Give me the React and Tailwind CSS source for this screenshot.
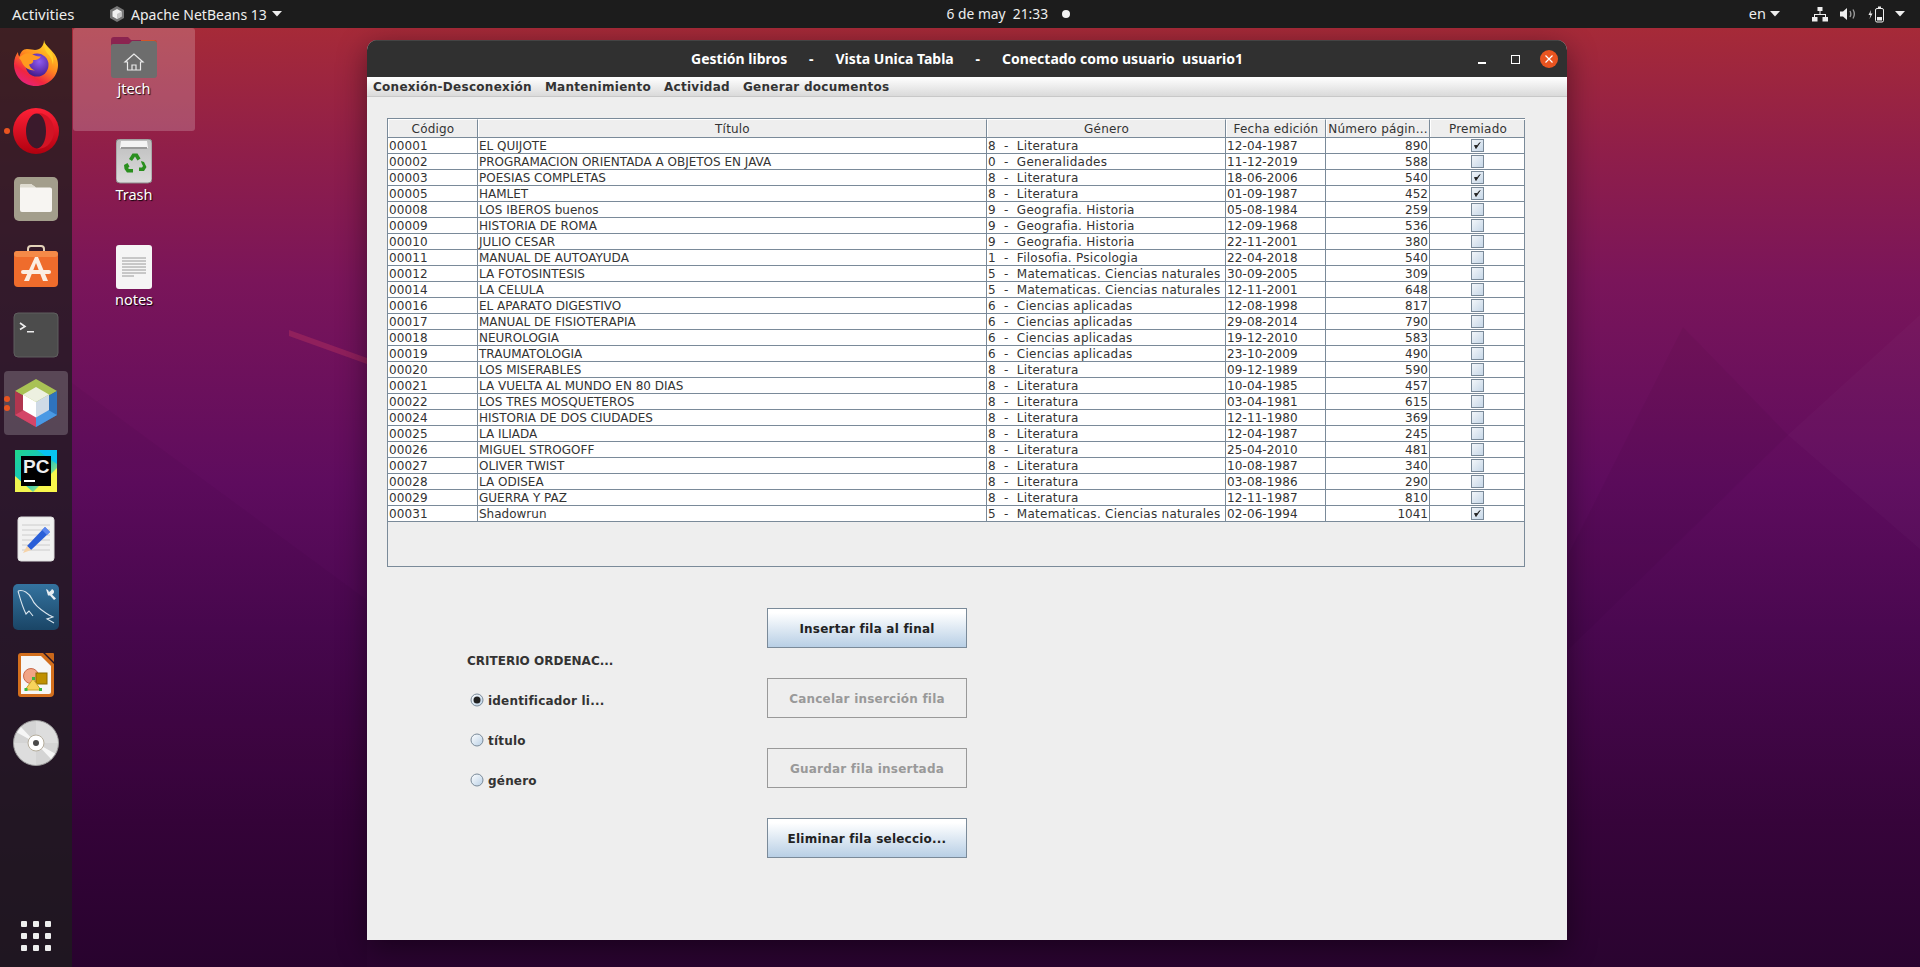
import React from "react";

const ROWS = [
  ["00001","EL QUIJOTE","8  -  Literatura","12-04-1987","890",1],
  ["00002","PROGRAMACION ORIENTADA A OBJETOS EN JAVA","0  -  Generalidades","11-12-2019","588",0],
  ["00003","POESIAS COMPLETAS","8  -  Literatura","18-06-2006","540",1],
  ["00005","HAMLET","8  -  Literatura","01-09-1987","452",1],
  ["00008","LOS IBEROS buenos","9  -  Geografia. Historia","05-08-1984","259",0],
  ["00009","HISTORIA DE ROMA","9  -  Geografia. Historia","12-09-1968","536",0],
  ["00010","JULIO CESAR","9  -  Geografia. Historia","22-11-2001","380",0],
  ["00011","MANUAL DE AUTOAYUDA","1  -  Filosofia. Psicologia","22-04-2018","540",0],
  ["00012","LA FOTOSINTESIS","5  -  Matematicas. Ciencias naturales","30-09-2005","309",0],
  ["00014","LA CELULA","5  -  Matematicas. Ciencias naturales","12-11-2001","648",0],
  ["00016","EL APARATO DIGESTIVO","6  -  Ciencias aplicadas","12-08-1998","817",0],
  ["00017","MANUAL DE FISIOTERAPIA","6  -  Ciencias aplicadas","29-08-2014","790",0],
  ["00018","NEUROLOGIA","6  -  Ciencias aplicadas","19-12-2010","583",0],
  ["00019","TRAUMATOLOGIA","6  -  Ciencias aplicadas","23-10-2009","490",0],
  ["00020","LOS MISERABLES","8  -  Literatura","09-12-1989","590",0],
  ["00021","LA VUELTA AL MUNDO EN 80 DIAS","8  -  Literatura","10-04-1985","457",0],
  ["00022","LOS TRES MOSQUETEROS","8  -  Literatura","03-04-1981","615",0],
  ["00024","HISTORIA DE DOS CIUDADES","8  -  Literatura","12-11-1980","369",0],
  ["00025","LA ILIADA","8  -  Literatura","12-04-1987","245",0],
  ["00026","MIGUEL STROGOFF","8  -  Literatura","25-04-2010","481",0],
  ["00027","OLIVER TWIST","8  -  Literatura","10-08-1987","340",0],
  ["00028","LA ODISEA","8  -  Literatura","03-08-1986","290",0],
  ["00029","GUERRA Y PAZ","8  -  Literatura","12-11-1987","810",0],
  ["00031","Shadowrun","5  -  Matematicas. Ciencias naturales","02-06-1994","1041",1],
];

const Arrow = ({ className = "" }) => (
  <svg width="10" height="6" viewBox="0 0 10 6" className={className}><path d="M0 0h10L5 5.5z" fill="#eee" /></svg>
);

const HexSmall = () => (
  <svg width="16" height="18" viewBox="0 0 16 18">
    <path d="M8 1l7 4v8l-7 4-7-4V5z" fill="#777" />
    <path d="M8 4l4.5 2.5v5L8 14l-4.5-2.5v-5z" fill="#f2f2f2" />
    <path d="M8 9l4.5-2.5v5L8 14z" fill="#c8c8c8" />
  </svg>
);

const TopBar = () => (
  <div className="flex h-[28px] shrink-0 items-center bg-[#1c1c1c] text-[#eeeeee] font-['Noto_Sans',sans-serif] relative z-20">
    <span className="ml-[12px] w-[97px] text-[15px]">Activities</span>
    <HexSmall />
    <span className="ml-[6px] text-[14px]">Apache NetBeans 13</span>
    <Arrow className="ml-[5px]" />
    <div className="flex-1 flex justify-center items-center">
      <span className="whitespace-pre ml-[-14px] text-[13.8px]">6 de may  21:33</span>
      <span className="w-[8px] h-[8px] rounded-full bg-[#f2f2f2] ml-[14px]" />
    </div>
    <span className="mr-[4px] text-[14.5px]">en</span>
    <Arrow className="mr-[32px]" />
    <svg width="16" height="15" viewBox="0 0 16 15" className="mr-[12px]" fill="#eee">
      <rect x="5.5" y="0" width="5" height="4" />
      <rect x="0" y="10" width="5.5" height="4.5" />
      <rect x="10.5" y="10" width="5.5" height="4.5" />
      <path d="M7.5 4h1v3h5.5v3h-1V8H3v2H2V7h5.5z" />
    </svg>
    <svg width="16" height="14" viewBox="0 0 16 14" className="mr-[12px]">
      <path d="M0 4.5h3L7 1v12L3 9.5H0z" fill="#eee" />
      <path d="M10 4c1 1.8 1 4.2 0 6M13 2.5c1.8 3 1.8 6 0 9" stroke="#999" strokeWidth="1.4" fill="none" />
    </svg>
    <svg width="17" height="17" viewBox="0 0 17 17" className="mr-[10px]">
      <path d="M3 4L0.5 9H2.5L1.5 13L4.5 7.5H2.5z" fill="#eee" />
      <rect x="7.5" y="2.5" width="8" height="13.5" rx="1.5" fill="none" stroke="#eee" />
      <rect x="10" y="0.5" width="3" height="2" fill="#eee" />
      <rect x="9" y="11" width="5" height="3.5" fill="#eee" />
    </svg>
    <Arrow className="mr-[15px]" />
  </div>
);

const Firefox = () => (
  <svg width="46" height="46" viewBox="0 0 46 46">
    <defs>
      <linearGradient id="ff1" x1="0.8" y1="0" x2="0.2" y2="1"><stop offset="0" stopColor="#ffe226" /><stop offset=".45" stopColor="#ff8a1f" /><stop offset=".75" stopColor="#f0263f" /><stop offset="1" stopColor="#e3218b" /></linearGradient>
      <radialGradient id="ff2" cx=".6" cy=".35" r=".7"><stop offset="0" stopColor="#8f5cf0" /><stop offset=".7" stopColor="#5b2ba8" /><stop offset="1" stopColor="#3a1d7f" /></radialGradient>
    </defs>
    <path d="M31 0c.6 4 3 6 5.500 8.500C42 14 45 18 45 25c0 12-10 21-22 21C10 46 1 36 1 24c0-5 2-9.500 4-12 0 2 .5 3.500 1.500 4.500C7.500 12 10 9 14 9c4 0 6 1 8 1 5 0 9-4 9-10z" fill="url(#ff1)" />
    <circle cx="24" cy="25" r="11.500" fill="url(#ff2)" />
    <path d="M6 18c3-4 9-6 13-4 3 1.500 5 3 9 2.500-2 3-5 3.500-8 3.500 1 2-1 4-4 4.500 1 3 3 5 6 6-6 0-11-3-13-8-.5-1.500-1.500-3-3-4.500z" fill="#ff9a1f" />
    <path d="M31 3c5 5 11 11 9 22-1-6-3-9-6-12-2-3-3-6-3-10z" fill="#ffd02a" />
  </svg>
);
const Opera = () => (
  <svg width="46" height="46" viewBox="0 0 46 46">
    <defs><linearGradient id="op" x1="0" y1="0" x2="0" y2="1"><stop offset="0" stopColor="#ff2137" /><stop offset="1" stopColor="#b0000f" /></linearGradient></defs>
    <circle cx="23" cy="23" r="23" fill="url(#op)" />
    <ellipse cx="24" cy="23" rx="11" ry="17.500" fill="#3a1a2c" />
    <path d="M24 5.500c4.500 0 9 7 9 17.500s-4.500 17.500-9 17.500c9 1.500 17-7 17-17.500S33 4 24 5.500z" fill="#d31425" />
  </svg>
);
const Files = () => (
  <svg width="46" height="46" viewBox="0 0 46 46">
    <rect width="44" height="44" x="1" y="1" rx="5" fill="#a39e8c" />
    <path d="M7 10a2 2 0 012-2h9l5 3.500h14a2 2 0 012 2V34a2 2 0 01-2 2H9a2 2 0 01-2-2z" fill="#f7f5f2" />
    <path d="M7 10a2 2 0 012-2h9l5 3.500H7z" fill="#dedbd0" />
  </svg>
);
const Store = () => (
  <svg width="46" height="46" viewBox="0 0 46 46">
    <path d="M15 8V5a3 3 0 013-3h10a3 3 0 013 3v3" stroke="#e3d2b9" strokeWidth="2" fill="none" />
    <rect x="1" y="7" width="44" height="36" rx="4" fill="#ef6c2c" />
    <rect x="1" y="7" width="44" height="6" rx="3" fill="#f58a48" />
    <path d="M22 13h3l10 24h-5l-7-18-7 18h-5z" fill="#fbeee2" />
    <rect x="8" y="26" width="30" height="4" rx="2" fill="#fbeee2" />
  </svg>
);
const Terminal = () => (
  <svg width="46" height="46" viewBox="0 0 46 46">
    <rect x="1" y="1" width="44" height="44" rx="4" fill="#4c4c4c" />
    <rect x="1" y="1" width="44" height="44" rx="4" fill="none" stroke="#5f5f5f" />
    <path d="M7 11l5 3.500-5 3" stroke="#eee" strokeWidth="1.600" fill="none" />
    <rect x="14" y="19" width="7" height="1.500" fill="#eee" />
  </svg>
);
const NetBeans = () => (
  <svg width="44" height="50" viewBox="0 0 44 50">
    <path d="M22 1l21 12-21 12L1 13z" fill="#a9c255" />
    <path d="M1 13l21 12v24L1 37z" fill="#b0364f" />
    <path d="M1 37l21-12v24z" fill="#d44568" />
    <path d="M43 13L22 25v24l21-12z" fill="#2f73bd" />
    <path d="M43 37L22 25v24z" fill="#4a99e4" />
    <path d="M22 9l13 7.500-13 7.500-13-7.500z" fill="#edf0e0" />
    <path d="M9 16.500l13 7.500v15.500l-13-7.500z" fill="#ffffff" />
    <path d="M35 16.500L22 24v15.500l13-7.500z" fill="#cfdae6" />
  </svg>
);
const PyCharm = () => (
  <svg width="42" height="42" viewBox="0 0 42 42">
    <defs><linearGradient id="pc" x1="0" y1="0" x2="1" y2="1"><stop offset="0" stopColor="#21d789" /><stop offset=".5" stopColor="#12c2c8" /><stop offset="1" stopColor="#fcf84a" /></linearGradient></defs>
    <rect width="42" height="42" fill="url(#pc)" />
    <path d="M0 42V26l18 16zM42 42H18l24-24z" fill="#fcf84a" opacity=".95" />
    <path d="M22 0h20v14z" fill="#07c3f2" />
    <rect x="6" y="6" width="30" height="30" fill="#000" />
    <text x="8" y="23" fontFamily="'Liberation Sans',sans-serif" fontWeight="700" fontSize="19" fill="#eee">PC</text>
    <rect x="9" y="30" width="11" height="2" fill="#fff" />
  </svg>
);
const Editor = () => (
  <svg width="38" height="46" viewBox="0 0 38 46">
    <rect x="1" y="1" width="36" height="44" rx="3" fill="#f1f1f1" stroke="#ddd" />
    <path d="M5 9h28M5 14h28M5 19h28M5 24h28M5 29h28M5 34h28" stroke="#ccc" strokeWidth="1" />
    <path d="M10 30L28 11l5 5-19 18z" fill="#2a5fd8" />
    <path d="M28 11l5 5-3 3-5-5z" fill="#5b86ef" />
    <path d="M10 30l4 4-8 3z" fill="#f6d3a8" />
  </svg>
);
const MySQL = () => (
  <svg width="46" height="46" viewBox="0 0 46 46">
    <defs><linearGradient id="my" x1="0" y1="0" x2="0" y2="1"><stop offset="0" stopColor="#34739f" /><stop offset="1" stopColor="#1a4566" /></linearGradient></defs>
    <rect width="46" height="46" rx="5" fill="url(#my)" />
    <path d="M5 7C10 5 16 9 19 15 22 23 30 27 36 31L40 33 34 35 41 39M5 7C7 14 9 22 13 30L16 27 20 32" stroke="#dbe6ee" strokeWidth="1.100" fill="none" />
    <path d="M33 5l2 1 1 2 2-1.500 1-1.500c2 1 3 3 1 5l-1 .5 4 4-2 1.500-4-4.500-2 0z" fill="#e8eef2" />
  </svg>
);
const Impress = () => (
  <svg width="38" height="46" viewBox="0 0 38 46">
    <path d="M4 1h22l11 11v29a4 4 0 01-4 4H4a3 3 0 01-3-3V4a3 3 0 013-3z" fill="#d36f1d" />
    <path d="M4 4h20l10 10v26a2 2 0 01-2 2H4z" fill="#f6f6f6" />
    <path d="M28 1h8a1 1 0 011 1v8z" fill="#c9661a" />
    <circle cx="14" cy="24" r="7.500" fill="#f2a585" stroke="#c9694a" />
    <rect x="19" y="21" width="11" height="11" fill="#c09000" stroke="#8c6a00" />
    <path d="M16 27l8 11H8z" fill="#f8d35b" stroke="#c9a22a" />
    <rect x="7.500" y="36" width="3" height="3" fill="#3db53d" /><rect x="22" y="36" width="3" height="3" fill="#3db53d" /><rect x="15" y="25" width="3" height="3" fill="#3db53d" />
  </svg>
);
const Disc = () => (
  <svg width="46" height="46" viewBox="0 0 46 46">
    <circle cx="23" cy="23" r="22.500" fill="#d4d4d4" stroke="#9a9a9a" />
    <path d="M23 23L4 12.500 8 7zM23 23l19 10.500-4 5.500z" fill="#f6f6f6" />
    <path d="M23 1v22H1a22 22 0 0022 22V23h22A22 22 0 0023 1z" fill="#fff" opacity=".22" />
    <circle cx="23" cy="23" r="8" fill="#fff" stroke="#b5ad9c" />
    <circle cx="23" cy="23" r="3" fill="#4a4a4a" />
  </svg>
);

const DockItem = ({ children, dots = 0, active }) => (
  <div className="relative h-[68px] flex items-center justify-center">
    {active && <div className="absolute left-[4px] top-[2px] w-[64px] h-[64px] rounded-[4px] bg-white/20" />}
    {dots > 0 && (
      <div className="absolute left-[4px] top-0 bottom-0 flex flex-col justify-center gap-[3px]">
        {Array.from({ length: dots }).map((_, i) => (
          <span key={i} className="w-[6px] h-[6px] rounded-full bg-[#e95420]" />
        ))}
      </div>
    )}
    <div className="relative flex">{children}</div>
  </div>
);

const Dock = () => (
  <div className="w-[72px] shrink-0 flex flex-col pt-[1px] bg-[#1c1c1c]/75 relative z-10">
    <DockItem><Firefox /></DockItem>
    <DockItem dots={1}><Opera /></DockItem>
    <DockItem><Files /></DockItem>
    <DockItem><Store /></DockItem>
    <DockItem><Terminal /></DockItem>
    <DockItem dots={2} active><NetBeans /></DockItem>
    <DockItem><PyCharm /></DockItem>
    <DockItem><Editor /></DockItem>
    <DockItem><MySQL /></DockItem>
    <DockItem><Impress /></DockItem>
    <DockItem><Disc /></DockItem>
    <div className="mt-auto mb-[16px] self-center grid grid-cols-3 gap-[6px]">
      {Array.from({ length: 9 }).map((_, i) => (
        <span key={i} className="w-[6px] h-[6px] rounded-[1px] bg-[#eeeeee]" />
      ))}
    </div>
  </div>
);

const DeskLabel = ({ children }) => (
  <span className="pt-[1px] text-[14.5px] leading-[18px] text-white font-['Noto_Sans',sans-serif] [text-shadow:1px_1px_1px_rgba(0,0,0,0.9)]">{children}</span>
);

const Desktop = () => (
  <>
    <div className="absolute left-[73px] top-[28px] w-[122px] h-[103px] rounded-[3px] bg-white/20 flex flex-col items-center pt-[8px]">
      <svg width="46" height="42" viewBox="0 0 46 42">
        <path d="M0 4a3 3 0 013-3h14l3 3h23a3 3 0 013 3v10H0z" fill="#8b2450" />
        <path d="M30 4h13a3 3 0 013 3v6H30z" fill="#d4542a" />
        <path d="M0 10a2 2 0 012-2h16l3-3h22a3 3 0 013 3v31a3 3 0 01-3 3H3a3 3 0 01-3-3z" fill="#6d6d6d" />
        <path d="M23 18l-9 8h2.500v8h13v-8H32zM21 29h4v5h-4z" fill="none" stroke="#eaeaea" strokeWidth="1.200" />
      </svg>
      <DeskLabel>jtech</DeskLabel>
    </div>
    <div className="absolute left-[73px] top-[139px] w-[122px] flex flex-col items-center">
      <svg width="36" height="45" viewBox="0 0 36 45">
        <defs><linearGradient id="tr" x1="0" y1="0" x2="0" y2="1"><stop offset="0" stopColor="#bdbdbd" /><stop offset="1" stopColor="#dcdcdc" /></linearGradient></defs>
        <rect width="36" height="44" rx="4" fill="url(#tr)" stroke="#8a8a8a" />
        <path d="M5 2h26l1 7H4z" fill="#f4f4f4" />
        <path d="M5 8h26v2H5z" fill="#9a9a9a" />
        <g fill="#2a8f1e">
          <path d="M13 20l3.500-5.500h5l3 5-3 2-2.500-4-3 4.500z" />
          <path d="M25 22l3 1 2.500 5-2.500 4h-5v-3.500h3l1-1.500-1.500-3z" />
          <path d="M8 26l3.500-2 2 3.500-1.500 1.500 1 1h4v3.500h-6l-2.500-3.500z" />
        </g>
      </svg>
      <DeskLabel>Trash</DeskLabel>
    </div>
    <div className="absolute left-[73px] top-[245px] w-[122px] flex flex-col items-center">
      <svg width="36" height="44" viewBox="0 0 36 44">
        <rect width="36" height="44" rx="3" fill="#f5f5f5" />
        <path d="M6 13h24M6 16h24M6 19h24M6 22h24M6 25h24M6 28h24M6 31h12" stroke="#9a9a9a" strokeWidth="1" />
      </svg>
      <DeskLabel>notes</DeskLabel>
    </div>
  </>
);

const Check = ({ on }) => (
  <svg width="13" height="13" viewBox="0 0 13 13">
    <defs><linearGradient id="cb" x1="0" y1="0" x2="1" y2="1"><stop offset="0" stopColor="#f4f7fa" /><stop offset="1" stopColor="#c5d6e7" /></linearGradient></defs>
    <rect x=".5" y=".5" width="12" height="12" fill="url(#cb)" stroke="#7a8a99" />
    {on ? <path d="M3.500 6.500l1.500 3 4-6-2.700 3z" fill="#222" stroke="#222" strokeWidth=".9" /> : null}
  </svg>
);

const Cell = ({ className = "", children }) => (
  <div className={`h-full shrink-0 border-r border-[#7a8a99] overflow-hidden whitespace-pre leading-[16px] ${className}`}>{children}</div>
);

const HCell = ({ className = "", children }) => (
  <div className={`h-full shrink-0 border-r border-[#7a8a99] overflow-hidden whitespace-pre text-center leading-[18px] tracking-[0.2px] border-t border-l border-t-white border-l-white ${className}`}>{children}</div>
);

const BookTable = () => (
  <div className="ml-[20px] mt-[21px] w-[1138px] h-[449px] border border-[#7a8a99] bg-[#eeeeee] font-['DejaVu_Sans',sans-serif] text-[12px] text-[#333333]">
    <div className="flex h-[19px] border-b border-[#7a8a99]">
      <HCell className="w-[90px]">Código</HCell>
      <HCell className="w-[509px]">Título</HCell>
      <HCell className="w-[239px]">Género</HCell>
      <HCell className="w-[100px]">Fecha edición</HCell>
      <HCell className="w-[104px]">Número págin...</HCell>
      <HCell className="w-[95px] border-r-0">Premiado</HCell>
    </div>
    {ROWS.map((r) => (
      <div key={r[0]} className="flex h-[16px] border-b border-[#7a8a99] bg-white">
        <Cell className="w-[90px] pl-[1px] tracking-[0.1px]">{r[0]}</Cell>
        <Cell className="w-[509px] pl-[1px]">{r[1]}</Cell>
        <Cell className="w-[239px] pl-[1px] tracking-[0.27px]">{r[2]}</Cell>
        <Cell className="w-[100px] pl-[1px] tracking-[0.1px]">{r[3]}</Cell>
        <Cell className="w-[104px] pr-[1px] text-right">{r[4]}</Cell>
        <div className="flex-1 flex items-center justify-center"><Check on={r[5]} /></div>
      </div>
    ))}
  </div>
);

const JButton = ({ children, disabled }) => (
  <div className={
    disabled
      ? "w-[200px] h-[40px] pt-[1px] tracking-[0.22px] border border-[#999999] flex items-center justify-center text-[#999999]"
      : "w-[200px] h-[40px] pt-[1px] tracking-[0.22px] border border-[#7a8a99] flex items-center justify-center text-[#222222] bg-gradient-to-b from-white from-[10%] to-[#b8cfe5]"
  }>{children}</div>
);

const Radio = ({ on, label }) => (
  <div className="flex items-center h-[40px] pl-[3px]">
    <svg width="14" height="14" viewBox="0 0 14 14">
      <defs><linearGradient id="rd" x1="0" y1="0" x2="1" y2="1"><stop offset="0" stopColor="#ffffff" /><stop offset="1" stopColor="#b8cfe5" /></linearGradient></defs>
      <circle cx="7" cy="7" r="6" fill="url(#rd)" stroke="#7a8a99" />
      {on ? <circle cx="7" cy="7" r="3.500" fill="#222" /> : null}
    </svg>
    <span className="ml-[4px] pt-[1px] tracking-[0.2px]">{label}</span>
  </div>
);

const AppWindow = () => (
  <div className="absolute left-[367px] top-[40px] w-[1200px] h-[900px] rounded-t-[10px] overflow-hidden shadow-[0_8px_30px_rgba(0,0,0,0.45)] flex flex-col bg-[#eeeeee] z-10">
    <div className="h-[37px] shrink-0 bg-[#303030] border-t border-[#444] flex items-center relative">
      <div className="flex-1 text-center text-white text-[14px] font-bold whitespace-pre font-['Noto_Sans',sans-serif] mb-[2px]">
        Gestión libros      -      Vista Unica Tabla      -      Conectado como usuario  usuario1
      </div>
      <div className="absolute right-[9px] top-[9px] flex items-center">
        <span className="w-[8px] h-[1.500px] bg-white mt-[8px] mr-[25px]" />
        <span className="w-[9px] h-[9px] border border-white mr-[20px]" />
        <span className="w-[18px] h-[18px] rounded-full bg-[#e95420] flex items-center justify-center">
          <svg width="8" height="8" viewBox="0 0 8 8"><path d="M.5.5l7 7M7.500.5l-7 7" stroke="#fff" strokeWidth="1.200" /></svg>
        </span>
      </div>
    </div>
    <div className="h-[20px] shrink-0 flex items-center bg-gradient-to-b from-white to-[#dadada] border-b border-[#c8c8c8] text-[12px] font-bold tracking-[0.28px] text-[#333333] font-['DejaVu_Sans',sans-serif] pl-[6px] gap-[13px]">
      <span>Conexión-Desconexión</span>
      <span>Mantenimiento</span>
      <span>Actividad</span>
      <span>Generar documentos</span>
    </div>
    <BookTable />
    <div className="flex ml-[100px] mt-[41px] font-['DejaVu_Sans',sans-serif] text-[12px] font-bold text-[#333333]">
      <div className="w-[300px] pt-[32px]">
        <div className="h-[40px] pt-[1px] flex items-center">CRITERIO ORDENAC...</div>
        <Radio on label="identificador li..." />
        <Radio label="título" />
        <Radio label="género" />
      </div>
      <div className="flex flex-col gap-[30px]">
        <JButton>Insertar fila al final</JButton>
        <JButton disabled>Cancelar inserción fila</JButton>
        <JButton disabled>Guardar fila insertada</JButton>
        <JButton>Eliminar fila seleccio...</JButton>
      </div>
    </div>
  </div>
);

const Wallpaper = () => (
  <svg className="absolute inset-0 w-full h-full" viewBox="0 0 1920 967">
    <path d="M289 330l78 28v6l-78-28z" fill="#a5295e" opacity=".6" />
    <path d="M72 383L367 600V967H72z" fill="#000" opacity=".03" />
    <path d="M1568 555L1683 327 1788 435 1568 650z" fill="#000" opacity=".035" />
    <path d="M1920 315L1788 435 1920 549z" fill="#fff" opacity=".02" />
  </svg>
);

export default function App() {
  return (
    <div className="relative w-[1920px] h-[967px] overflow-hidden flex flex-col bg-[linear-gradient(180deg,#a62a38_3%,#8f1e4a_16%,#7a155a_29%,#5e0c5e_50%,#4a0850_65%,#36043a_85%,#2a0430_100%)]">
      <Wallpaper />
      <TopBar />
      <div className="flex-1 min-h-0 flex relative">
        <Dock />
      </div>
      <Desktop />
      <AppWindow />
    </div>
  );
}
